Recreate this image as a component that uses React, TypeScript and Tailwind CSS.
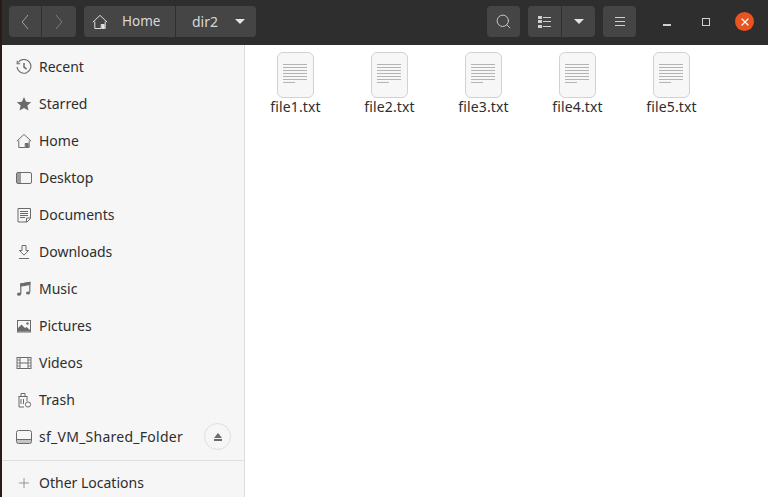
import * as React from 'react';
import { Search, X, Plus } from 'lucide-react';

const HomeIcon = ({ className = '' }: { className?: string }) => (
  <svg viewBox="0 0 16 16" className={className} fill="none" stroke="currentColor" strokeWidth="1">
    <path d="M0.8 8.2 8 1.4l7.2 6.8" />
    <path d="M2.8 7.5v7h6.4v-4h3v4h1V7.5" />
    <path d="M9.5 10.5h2.5v4.5H9.5z" fill="currentColor" stroke="none" />
  </svg>
);

const sidebarIcons: Record<string, React.ReactNode> = {
  Recent: (
    <svg viewBox="0 0 16 16" className="size-4" fill="none" stroke="currentColor" strokeWidth="1.1">
      <path d="M2.2 3.5A6.9 6.9 0 1 1 1.1 8" />
      <path d="M1.2 1.8v3h3" />
      <path d="M8 4v4.2l2.6 2" strokeWidth="1.5" />
    </svg>
  ),
  Starred: (
    <svg viewBox="0 0 16 16" className="size-4" fill="currentColor">
      <path d="M8 1l2.1 4.7 5.1.5-3.8 3.4 1.1 5L8 12l-4.5 2.6 1.1-5L.8 6.2l5.1-.5z" />
    </svg>
  ),
  Home: <HomeIcon className="size-4" />,
  Desktop: (
    <svg viewBox="0 0 16 16" className="size-4" fill="none" stroke="currentColor">
      <rect x="0.5" y="2.5" width="15" height="11" rx="1.5" />
      <path d="M1 3h4v10H1z" fill="currentColor" fillOpacity="0.65" stroke="none" />
    </svg>
  ),
  Documents: (
    <svg viewBox="0 0 16 16" className="size-4" fill="none" stroke="currentColor">
      <path d="M2 1.5h12.5v10l-3.5 3.5H2z" />
      <path d="M4 4.5h8M4 6.5h8M4 8.5h8M4 10.5h5" />
      <path d="M10.5 15v-4h4" />
    </svg>
  ),
  Downloads: (
    <svg viewBox="0 0 16 16" className="size-4" fill="none" stroke="currentColor">
      <path d="M6 1.5h4v5h2.5L8 11.2 3.5 6.5H6z" />
      <path d="M3 14.5h10" />
    </svg>
  ),
  Music: (
    <svg viewBox="0 0 16 16" className="size-4" fill="none" stroke="currentColor" strokeWidth="1.2">
      <path d="M4.8 13V3l9-1.5V11.5" />
      <path d="M4.8 3l9-1.5v2l-9 1.5z" fill="currentColor" />
      <ellipse cx="3" cy="13.2" rx="2" ry="1.6" fill="currentColor" stroke="none" />
      <ellipse cx="12" cy="12" rx="2" ry="1.6" fill="currentColor" stroke="none" />
    </svg>
  ),
  Pictures: (
    <svg viewBox="0 0 16 16" className="size-4" fill="none" stroke="currentColor">
      <rect x="1.5" y="2.5" width="13" height="11.5" />
      <path d="M2 13.5V10l3.5-3.5L9 10l1.5-1L14 12v1.5z" fill="currentColor" stroke="none" />
      <circle cx="11.5" cy="5.5" r="1.2" fill="currentColor" stroke="none" />
    </svg>
  ),
  Videos: (
    <svg viewBox="0 0 16 16" className="size-4" fill="none" stroke="currentColor">
      <rect x="1" y="2.5" width="14" height="11" />
      <path d="M4 2.5v11M12 2.5v11M4 8h8" />
      <path d="M1 5h3M1 8h3M1 11h3M12 5h3M12 8h3M12 11h3" strokeOpacity="0.8" />
    </svg>
  ),
  Trash: (
    <svg viewBox="0 0 16 16" className="size-4" fill="none" stroke="currentColor">
      <path d="M2.5 4.5h9M5 4V1.5h4V4" />
      <path d="M3 4.5V15h5M11 4.5V9" />
      <path d="M5 7v5M7.5 7v5" />
      <circle cx="12" cy="12.5" r="2.6" />
    </svg>
  ),
  sf_VM_Shared_Folder: (
    <svg viewBox="0 0 16 16" className="size-4" fill="none" stroke="currentColor">
      <rect x="0.5" y="1.5" width="15" height="13" rx="2" />
      <path d="M1 10.5h14" />
      <path d="M1 11h14v3H1z" fill="currentColor" fillOpacity="0.35" stroke="none" />
    </svg>
  ),
};

const places = ['Recent', 'Starred', 'Home', 'Desktop', 'Documents', 'Downloads', 'Music', 'Pictures', 'Videos', 'Trash', 'sf_VM_Shared_Folder'];
const files = ['file1.txt', 'file2.txt', 'file3.txt', 'file4.txt', 'file5.txt'];

const Caret = () => <div className="size-0 border-x-[5px] border-t-[5px] border-x-transparent border-t-[#e4e4e4]" />;

function FileIcon() {
  return (
    <div className="flex h-[46px] w-[37px] flex-col items-start gap-[2px] rounded-[6px] border-[1.5px] border-[#d2d2d2] bg-[#f7f7f7] px-[5.5px] pt-[11px]">
      {[0, 1, 2, 3, 4, 5].map((i) => (
        <div key={i} className="h-px w-full bg-[#b4b4b4]" />
      ))}
      <div className="h-px w-[12px] bg-[#b4b4b4]" />
    </div>
  );
}

export default function App() {
  return (
    <div className="flex h-[497px] w-[768px] flex-col overflow-hidden bg-white font-['Noto_Sans',sans-serif]">
      <header className="flex h-[45px] shrink-0 items-center border-l-2 border-[#2b1a17] bg-[#2e2e2e] pb-[2px] text-[#d8d8d8]">
        <div className="ml-[7px] flex h-[31px] w-[67px] rounded-[4px] bg-[#454545]">
          <div className="flex w-[33px] items-center justify-center border-r border-[#2e2e2e]">
            <svg viewBox="0 0 8 16" className="h-[16px] w-[8px] text-[#a0a0a0]" fill="none" stroke="currentColor" strokeWidth="1">
              <path d="M7 1 1.2 8 7 15" />
            </svg>
          </div>
          <div className="flex flex-1 items-center justify-center">
            <svg viewBox="0 0 8 16" className="h-[16px] w-[8px] text-[#7c7c7c]" fill="none" stroke="currentColor" strokeWidth="1">
              <path d="M1 1l5.8 7L1 15" />
            </svg>
          </div>
        </div>
        <div className="ml-2 flex h-[31px] w-[172px] rounded-[4px] bg-[#454545] text-[14px]">
          <div className="flex w-[92px] items-center gap-[14px] border-r border-[#2e2e2e] pl-[8px]">
            <HomeIcon className="size-[16px] text-[#e0e0e0]" />
            <span className="text-[13.5px]">Home</span>
          </div>
          <div className="flex flex-1 items-center gap-[17px] pl-[16px]">
            <span>dir2</span>
            <Caret />
          </div>
        </div>
        <div className="ml-[231px] flex h-[31px] w-[33px] items-center justify-center rounded-[4px] bg-[#454545]">
          <Search className="size-[17px] text-[#cfcfcf]" strokeWidth={1.3} />
        </div>
        <div className="ml-2 flex h-[31px] w-[67px] rounded-[4px] bg-[#454545]">
          <div className="flex w-[34px] flex-col items-center justify-center gap-[1.5px] border-r border-[#2e2e2e]">
            {[0, 1, 2].map((i) => (
              <div key={i} className="flex items-center gap-px">
                <div className="h-[3px] w-[4px] bg-[#d0d0d0]" />
                <div className="h-px w-[8px] bg-[#d0d0d0]" />
              </div>
            ))}
          </div>
          <div className="flex flex-1 items-center justify-center">
            <Caret />
          </div>
        </div>
        <div className="ml-2 flex h-[31px] w-[33px] flex-col items-center justify-center gap-[3px] rounded-[4px] bg-[#454545]">
          {[0, 1, 2].map((i) => (
            <div key={i} className="h-px w-[10px] bg-[#cfcfcf]" />
          ))}
        </div>
        <div className="ml-[27px] mt-[7px] h-[1.5px] w-[8px] bg-[#cfcfcf]" />
        <div className="ml-[31px] size-[8px] border border-[#cfcfcf]" />
        <div className="ml-[25px] flex size-[19px] items-center justify-center rounded-full bg-[#e95420]">
          <X className="size-[12px] text-white" strokeWidth={2.5} />
        </div>
      </header>
      <div className="flex min-h-0 flex-1">
        <aside className="flex w-[245px] shrink-0 flex-col border-r border-[#dcdcdc] border-l-2 border-l-[#2b1a17] bg-[#f6f6f6] pt-[3px] text-[14px] text-[#2e2e2e]">
          {places.map((p) => (
            <div key={p} className="flex h-[37px] shrink-0 items-center pl-[14px]">
              <span className="flex w-[23px] text-[#6b6b6b]">{sidebarIcons[p]}</span>
              <span className={p === 'sf_VM_Shared_Folder' ? 'tracking-[0.26px]' : ''}>{p}</span>
              {p === 'sf_VM_Shared_Folder' && (
                <div className="ml-auto mr-[13px] flex size-[27px] flex-col items-center justify-center gap-px rounded-full border border-[#dedede]">
                  <div className="size-0 border-x-[4px] border-b-[5px] border-x-transparent border-b-[#6b6b6b]" />
                  <div className="h-[2px] w-[8px] bg-[#6b6b6b]" />
                </div>
              )}
            </div>
          ))}
          <div className="mt-[5px] border-t border-[#dedede]" />
          <div className="flex h-[43px] shrink-0 items-center pl-[14px]">
            <span className="flex w-[23px] text-[#6b6b6b]">
              <Plus className="size-4" strokeWidth={1} />
            </span>
            <span>Other Locations</span>
          </div>
        </aside>
        <main className="flex flex-1 items-start gap-[4px] pl-[5px] pt-[7px]">
          {files.map((f) => (
            <div key={f} className="flex w-[90px] flex-col items-center gap-px text-[14px] leading-[16px] text-[#2e2e2e]">
              <FileIcon />
              <span className="pl-px tracking-[0.12px]">{f}</span>
            </div>
          ))}
        </main>
      </div>
    </div>
  );
}
